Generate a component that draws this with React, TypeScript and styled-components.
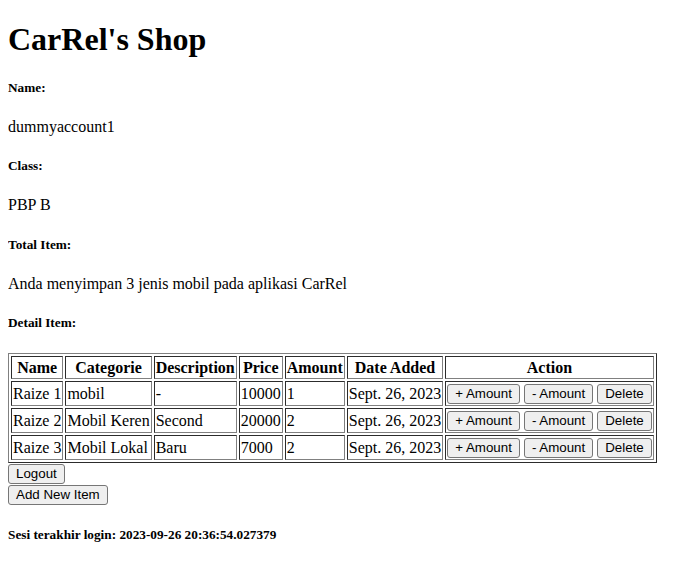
import React from "react";
import styled, { createGlobalStyle } from "styled-components";

const Global = createGlobalStyle`
  body {
    margin: 8px;
    font-family: "Liberation Serif", "Times New Roman", serif;
    font-size: 16px;
    color: #000;
    background: #fff;
  }
`;

const Title = styled.h1`
  font-size: 2em;
  font-weight: bold;
  margin: 0.4em 0 0.67em;
`;

const Label = styled.h5`
  font-size: 0.83em;
  font-weight: bold;
  margin: 1.67em 0;
`;

const Text = styled.p`
  margin: 1em 0;
`;

const Table = styled.table`
  border: 1px outset #808080;
  border-spacing: 2px;
  border-collapse: separate;
  margin-top: 1px;
`;

const Th = styled.th`
  border: 1px inset #808080;
  padding: 1px;
  font-weight: bold;
  text-align: center;
  height: 19px;
`;

const Td = styled.td`
  border: 1px inset #808080;
  padding: 1px;
  text-align: left;
  white-space: nowrap;
`;

const Button = styled.button`
  font-family: "Liberation Sans", Arial, sans-serif;
  font-size: 13.333px;
  line-height: 16px;
  padding: 1px 7px;
  border: 1px solid #767676;
  border-radius: 3px;
  background: #efefef;
  color: #000;
  margin: 0;
  vertical-align: middle;
`;

const ActionCell = styled(Td)`
  text-align: center;
  height: 21px;
`;

const BlockRow = styled.div`
  display: block;
  height: 21px;
`;

const items = [
  { name: "Raize 1", cat: "mobil", desc: "-", price: "10000", amount: "1" },
  { name: "Raize 2", cat: "Mobil Keren", desc: "Second", price: "20000", amount: "2" },
  { name: "Raize 3", cat: "Mobil Lokal", desc: "Baru", price: "7000", amount: "2" },
];

export default function App() {
  return (
    <>
      <Global />
      <Title>CarRel's Shop</Title>
      <Label>Name:</Label>
      <Text>dummyaccount1</Text>
      <Label>Class:</Label>
      <Text>PBP B</Text>
      <Label>Total Item:</Label>
      <Text>Anda menyimpan 3 jenis mobil pada aplikasi CarRel</Text>
      <Label>Detail Item:</Label>
      <Table>
        <tbody>
          <tr>
            <Th>Name</Th>
            <Th>Categorie</Th>
            <Th>Description</Th>
            <Th>Price</Th>
            <Th>Amount</Th>
            <Th>Date Added</Th>
            <Th>Action</Th>
          </tr>
          {items.map((it) => (
            <tr key={it.name}>
              <Td>{it.name}</Td>
              <Td>{it.cat}</Td>
              <Td>{it.desc}</Td>
              <Td>{it.price}</Td>
              <Td>{it.amount}</Td>
              <Td>Sept. 26, 2023</Td>
              <ActionCell>
                <Button>+ Amount</Button> <Button>- Amount</Button>{" "}
                <Button>Delete</Button>
              </ActionCell>
            </tr>
          ))}
        </tbody>
      </Table>
      <BlockRow>
        <Button>Logout</Button>
      </BlockRow>
      <BlockRow>
        <Button>Add New Item</Button>
      </BlockRow>
      <Label>Sesi terakhir login: 2023-09-26 20:36:54.027379</Label>
    </>
  );
}
